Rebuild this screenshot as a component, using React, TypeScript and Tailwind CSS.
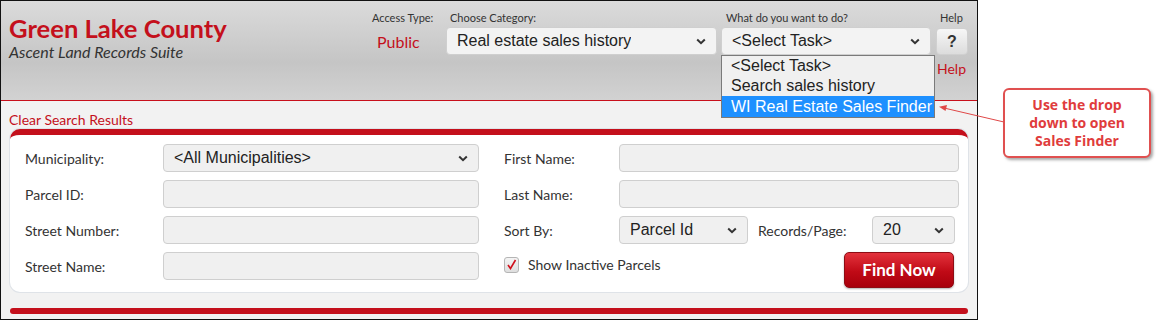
import React from "react";

const Chevron = () => (
  <svg width="10" height="7" viewBox="0 0 10 7" className="shrink-0">
    <path d="M1.2 1.5 L5 5.2 L8.8 1.5" fill="none" stroke="#333" strokeWidth="2" />
  </svg>
);

function FakeSelect({ text, className, pad = "pl-[10px] pr-[10px]" }: { text: string; className: string; pad?: string }) {
  return (
    <div
      className={`flex items-center justify-between rounded-[4px] border border-[#cfcfcf] bg-[#f0f0f0] font-['Liberation_Sans',Arial,sans-serif] text-[16px] text-[#222] ${pad} ${className}`}
    >
      <span className="truncate">{text}</span>
      <Chevron />
    </div>
  );
}

const Field = ({ className }: { className: string }) => (
  <div className={`h-[28px] rounded-[4px] border border-[#cfcfcf] bg-[#f0f0f0] ${className}`} />
);

const Label = ({ children, className = "" }: { children: React.ReactNode; className?: string }) => (
  <div className={`text-[14px] text-[#333] ${className}`}>{children}</div>
);

export default function App() {
  return (
    <div className="relative flex h-[320px] w-[1157px] bg-white font-['Lato',sans-serif]">
      <div className="flex h-[320px] w-[978px] flex-col border border-[#111]">
        {/* header */}
        <header className="flex h-[100px] shrink-0 border-b border-[#c8101c] bg-[linear-gradient(to_bottom,#dbdbdb_0%,#c5c5c5_62%,#d2d2d2_100%)]">
          <div className="w-[371px] pl-[8px] pt-[12px]">
            <h1 className="text-[25.6px] font-bold leading-[30px] text-[#c4101c]">Green Lake County</h1>
            <p className="text-[16px] italic leading-[18px] text-[#333]">Ascent Land Records Suite</p>
          </div>
          <div className="w-[74px] pt-[10px]">
            <div className="text-[11px] leading-[14px] text-[#333]">Access Type:</div>
            <div className="mt-[7px] pl-[5px] text-[16px] leading-[20px] text-[#c4101c]">Public</div>
          </div>
          <div className="w-[275px] pt-[10px]">
            <div className="pl-[4px] text-[11px] leading-[14px] text-[#333]">Choose Category:</div>
            <FakeSelect text="Real estate sales history" className="mt-[2px] h-[28px] w-[271px] bg-[#f3f3f3]" />
          </div>
          <div className="relative w-[215px] pt-[10px]">
            <div className="pl-[5px] text-[11px] leading-[14px] text-[#333]">What do you want to do?</div>
            <FakeSelect
              text="<Select Task>"
              className="mt-[2px] h-[28px] w-[210px] border-[#3fbf3f] bg-[#f3f3f3]"
            />
          </div>
          <div className="flex w-[40px] flex-col items-start pt-[10px]">
            <div className="pl-[4px] text-[11px] leading-[14px] text-[#333]">Help</div>
            <div className="mt-[3px] flex h-[27px] w-[32px] items-center justify-center rounded-[4px] border border-[#d0d0d0] bg-[linear-gradient(to_bottom,#f7f7f7,#dcdcdc)] font-['Liberation_Sans',Arial,sans-serif] text-[16px] font-bold text-[#333]">
              ?
            </div>
            <div className="mt-[6px] pl-[1px] text-[14px] leading-[16px] text-[#c4101c]">Help</div>
          </div>
        </header>

        {/* body */}
        <main className="flex-1 bg-[#f2f2f2] px-[8px] pt-[10px]">
          <div className="text-[14px] leading-[17px] text-[#c4101c]">Clear Search Results</div>
          <section className="mx-[1px] mt-[1px] rounded-[10px] border-t-[6px] border-[#c4101c] bg-white pb-[4px] pt-[9px] shadow-[0_0_0_1px_#dfe3e8]">
            <div className="flex">
              {/* left column */}
              <div className="flex w-[470px] flex-col gap-[8px] pl-[15px]">
                <div className="flex items-center">
                  <Label className="w-[138px]">Municipality:</Label>
                  <FakeSelect text="<All Municipalities>" className="h-[28px] w-[316px]" />
                </div>
                <div className="flex items-center">
                  <Label className="w-[138px]">Parcel ID:</Label>
                  <Field className="w-[316px]" />
                </div>
                <div className="flex items-center">
                  <Label className="w-[138px]">Street Number:</Label>
                  <Field className="w-[316px]" />
                </div>
                <div className="flex items-center">
                  <Label className="w-[138px]">Street Name:</Label>
                  <Field className="w-[316px]" />
                </div>
              </div>
              {/* right column */}
              <div className="flex flex-1 flex-col gap-[8px] pl-[24px]">
                <div className="flex items-center">
                  <Label className="w-[115px]">First Name:</Label>
                  <Field className="w-[340px]" />
                </div>
                <div className="flex items-center">
                  <Label className="w-[115px]">Last Name:</Label>
                  <Field className="w-[340px]" />
                </div>
                <div className="flex items-center">
                  <Label className="w-[115px]">Sort By:</Label>
                  <FakeSelect text="Parcel Id" className="h-[28px] w-[129px]" />
                  <Label className="ml-[10px] w-[114px]">Records/Page:</Label>
                  <FakeSelect text="20" className="h-[28px] w-[83px]" />
                </div>
                <div className="flex w-[450px] items-start justify-between">
                  <div className="mt-[2px] flex items-center">
                    <div className="flex h-[16px] w-[15px] items-center justify-center rounded-[3px] border border-[#b5b5b5] bg-[linear-gradient(to_bottom,#f4f4f4,#dedede)]">
                      <svg width="11" height="11" viewBox="0 0 11 11">
                        <path d="M2 6 L4.5 9.5 L9.5 1" fill="none" stroke="#d0101c" strokeWidth="1.6" />
                      </svg>
                    </div>
                    <Label className="ml-[9px]">Show Inactive Parcels</Label>
                  </div>
                  <button className="flex h-[36px] w-[110px] items-center justify-center rounded-[5px] border border-[#8e0c14] bg-[linear-gradient(to_bottom,#e3323c,#c00a16_55%,#a8000c)] text-[17px] font-bold text-white shadow-[0_1px_2px_rgba(0,0,0,0.3)]">
                    Find Now
                  </button>
                </div>
              </div>
            </div>
          </section>
          <div className="mx-[1px] mt-[16px] h-[6px] rounded-[3px] bg-[#c4101c]" />
        </main>
      </div>

      {/* open task dropdown */}
      <div className="absolute left-[721px] top-[55px] w-[214px] border border-[#7a7a7a] bg-[#f0f0f0] font-['Liberation_Sans',Arial,sans-serif] text-[16px] leading-[20px] text-[#222]">
        <div className="h-[19px] pl-[9px] leading-[19px]">&lt;Select Task&gt;</div>
        <div className="h-[21px] pl-[9px] leading-[21px]">Search sales history</div>
        <div className="h-[21px] bg-[#1e90ff] pl-[9px] leading-[21px] text-white">WI Real Estate Sales Finder</div>
      </div>

      {/* annotation */}
      <svg className="absolute left-0 top-0" width="1157" height="320">
        <line x1="1004" y1="122" x2="944" y2="108" stroke="#e04848" strokeWidth="1" />
        <path d="M939 106.8 L947 105 L945.5 111 Z" fill="#e04848" />
      </svg>
      <div className="absolute left-[1003px] top-[88px] flex h-[70px] w-[148px] items-center justify-center rounded-[6px] border-2 border-[#e05050] bg-white shadow-[2px_2px_3px_rgba(0,0,0,0.35)]">
        <p className="text-center font-['Open_Sans',sans-serif] text-[14px] font-bold leading-[18px] text-[#e03c3c]">
          Use the drop
          <br />
          down to open
          <br />
          Sales Finder
        </p>
      </div>
    </div>
  );
}
